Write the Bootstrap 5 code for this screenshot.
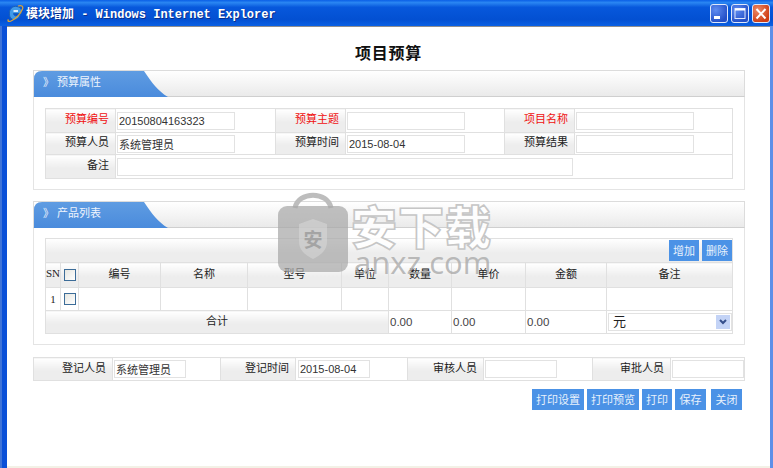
<!DOCTYPE html>
<html>
<head>
    <meta charset="utf-8">
    <link href="https://cdn.jsdelivr.net/npm/bootstrap@5.3.0/dist/css/bootstrap.min.css" rel="stylesheet">
    <style>
        html, body { height: 468px; overflow: hidden; }
        body {
            margin: 0;
            font: 11px "Liberation Sans", "Noto Sans CJK SC", sans-serif;
            color: #222;
            background: #fff;
        }
        .ie-window { width: 773px; height: 468px; position: relative; background: #0a50d8; box-shadow: inset 2px 0 0 #3f74d8; }

        /* Barra de titulo */
        .ie-titlebar {
            height: 26px;
            padding: 0 3px 0 7px;
            background: linear-gradient(180deg, #0a5fe6 0%, #2a86f2 10%, #0758dc 28%, #0350d2 75%, #0a60e4 100%);
            color: #fff;
        }
        .ie-title {
            margin-left: 2px;
            font: bold 12px "Liberation Mono", "Noto Sans CJK SC", monospace;
            text-shadow: 1px 1px 0 #0a2f8c;
            white-space: pre;
        }
        .win-btn {
            width: 18px; height: 19px;
            margin-left: 3px;
            border: 1px solid #dfe8fb;
            border-radius: 3px;
            background: radial-gradient(circle at 30% 30%, #5f8cf0, #2450c8 75%);
            padding: 0;
        }
        .win-btn svg { display: block; }
        .win-close { background: radial-gradient(circle at 30% 30%, #ec8a68, #cf3e14 75%); }

        .ie-content {
            position: absolute;
            left: 7px; top: 26px;
            width: 763px; height: 440px;
            background: #fff;
            border-top: 1px solid #8f8f8f;
            padding: 0 26px;
        }
        .ie-right { position: absolute; right: 0; top: 26px; width: 3px; height: 442px; background: #5d8fe8; }
        .ie-bottom { position: absolute; left: 7px; top: 466px; width: 763px; height: 2px; background: #f3f1e6; }

        .page-title {
            margin: 0;
            height: 43px;
            padding-top: 17px;
            font-size: 16px;
            line-height: 20px;
            font-weight: 700;
            letter-spacing: .7px;
            text-align: center;
            color: #111;
        }

        /* Paneles */
        .sec-panel { width: 712px; border: 1px solid #e4e4e4; border-top: 0; }
        .sec-one { height: 120px; }
        .sec-two { height: 144px; margin-top: 11px; }
        .sec-head {
            height: 27px;
            margin-right: -1px;
            margin-left: -1px;
            border: 1px solid #dcdcdc;
            border-bottom-color: #cfcfcf;
            background: linear-gradient(180deg, #fff, #eaeaea);
        }
        .sec-tab {
            width: 134px; height: 26px;
            padding-left: 9px;
            color: #eef4fd;
            line-height: 23px;
            background: linear-gradient(180deg, #5f9ce2, #4a8bdc);
            clip-path: path("M0 26 V8 Q0 0 8 0 H110 C118 12 124 20 134 26 Z");
            white-space: pre;
        }
        .sec-body { padding: 10px 11px 0; }
        .sec-one .sec-body { padding-top: 11px; }

        /* Tablas */
        .data-table { table-layout: fixed; width: 100%; margin: 0; border-color: #e0e0e0; --bs-table-bg: transparent; font-size: 11px; }
        .data-table td, .data-table th { padding: 0; font-weight: 400; vertical-align: middle; border-color: #e0e0e0; color: #222; }
        .lbl {
            background: linear-gradient(180deg, #fff 0%, #ededed 55%, #ededed 100%) !important;
            text-align: right;
            padding-right: 6px !important;
            padding-bottom: 5px !important;
            white-space: nowrap;
        }
        .lbl-red { color: #f01010 !important; }
        .hd {
            text-align: center;
            padding-bottom: 5px !important;
            background: linear-gradient(180deg, #fff 0%, #ededed 55%, #ededed 100%) !important;
        }
        .txt-field {
            display: block;
            height: 18px;
            margin-left: 1px;
            padding: 0 1px;
            border: 1px solid #e2e2e2;
            border-radius: 0;
            font-size: 11px;
            line-height: 16px;
            color: #333;
            background: #fff;
            outline: 0;
        }
        .w-118 { width: 118px; }
        .w-456 { width: 456px; }
        .w-73 { width: 72px; }

        .r-23 tr { height: 23px; }
        .r-22 { height: 22px !important; }
        .r-24 { height: 24px !important; }
        .r-25 { height: 25px !important; }
        .c-sn { width: 15px; } .c-ck { width: 18px; } .c-a { width: 82px; } .c-b { width: 87px; }
        .c-c { width: 94px; } .c-d { width: 47px; } .c-e { width: 63px; } .c-f { width: 74px; } .c-g { width: 81px; }
        .c-lbl1 { width: 70px; } .c-val1 { width: 160px; } .c-val2 { width: 159px; } .c-lbl2 { width: 70px; }
        .c-b1 { width: 79px; } .c-b2 { width: 108px; } .c-b3 { width: 75px; } .c-b4 { width: 112px; }
        .c-b5 { width: 76px; } .c-b6 { width: 109px; } .c-b7 { width: 78px; }

        .serif-cell { font: 11px "Liberation Serif", serif; text-align: center; }
        .grid-check {
            display: block;
            width: 12px; height: 12px;
            margin: 0 auto;
            border: 1px solid #3c6c98;
            border-radius: 0;
            background: linear-gradient(135deg, #e6e6e0, #fff);
            appearance: none;
        }
        .hd .grid-check { margin-top: 5px; }
        .num-cell { padding-left: 1px !important; color: #444 !important; font-size: 11.5px !important; }
        .tool-row {
            height: 24px;
            border: 1px solid #e0e0e0;
            border-bottom: 0;
            padding: 1px 0 0;
            background: linear-gradient(180deg, #fff 0%, #ededed 60%);
        }
        .act-btn {
            height: 21px;
            padding: 0 4px;
            border: 0;
            border-radius: 0;
            background: #4b92e6;
            color: #e8f1fc;
            font-size: 11px;
            line-height: 20px;
        }
        .act-btn:hover { background: #4b92e6; color: #e8f1fc; }
        .tool-btns { gap: 3px; }
        .unit-select {
            height: 18px;
            width: 124px;
            margin-left: 1px;
            padding: 0 0 0 4px;
            border: 1px solid #e2e2e2;
            border-radius: 0;
            font-size: 13px;
            line-height: 16px;
            color: #222;
            background-color: #fff;
            background-size: 14px 14px;
            background-position: right 1px center;
            background-image: url("data:image/svg+xml,%3Csvg xmlns='http://www.w3.org/2000/svg' viewBox='0 0 14 14'%3E%3Crect width='14' height='14' fill='%23c3d3f6'/%3E%3Cpath d='M4 5l3 3 3-3' fill='none' stroke='%23354f8c' stroke-width='2'/%3E%3C/svg%3E");
        }

        .foot-table { width: 712px; margin-top: 12px; }
        .foot-btns { width: 709px; margin-top: 8px; gap: 3px; }
        .gap-left { margin-left: 2px; }
        .btn-wide { width: 31px; }
        .btn-gap { margin-left: 2px; }

        /* Marca de agua */
        .wm-logo { position: absolute; left: 271px; top: 165px; }
        .wm-cn {
            position: absolute;
            left: 344px; top: 171px;
            font: 900 46px/52px "Noto Sans CJK SC", sans-serif;
            letter-spacing: 1px;
            color: rgba(255, 255, 255, .9);
            -webkit-text-stroke: 1.6px #c6c6c6;
            white-space: nowrap;
        }
        .wm-en {
            position: absolute;
            left: 347px; top: 217px;
            font: 400 31px/36px "Open Sans", sans-serif;
            color: rgba(170, 170, 170, .8);
            white-space: nowrap;
        }
    </style>
</head>
<body>
<div class="ie-window">
    <div class="ie-titlebar d-flex align-items-center">
        <svg width="17" height="18" viewBox="0 0 17 18">
            <path d="M2.5 11c-1-5.500 3-9.500 7.500-8.500 4.500 .8 4.800 4.500 4.500 7H6.500c.2 2.800 4 3.500 7 1-1 4-4.500 5-6.500 5-2.500 0-4.200-1.500-4.500-4.500z" fill="#3f9aea" stroke="#1a5fb8" stroke-width="1"/>
            <path d="M6.500 7h4.500" stroke="#fff" stroke-width="1.6"/>
            <path d="M1.500 15.500c-1.500 2 .5 2.800 3.500 1 4-2 8.500-7 10.500-11.500 1-3-1-4-4.500-3" fill="none" stroke="#d9a23a" stroke-width="1.3"/>
        </svg>
        <div class="ie-title">模块增加 - Windows Internet Explorer</div>
        <div class="ms-auto d-flex">
            <button class="win-btn" type="button" aria-label="min"><svg width="16" height="17" viewBox="0 0 16 17"><rect x="3" y="11" width="6" height="3" fill="#fff"/></svg></button>
            <button class="win-btn" type="button" aria-label="max"><svg width="16" height="17" viewBox="0 0 16 17"><rect x="3" y="3.500" width="10" height="10" fill="none" stroke="#dfe8fb" stroke-width="1"/><path d="M3 4.500h10" stroke="#fff" stroke-width="2"/></svg></button>
            <button class="win-btn win-close" type="button" aria-label="close"><svg width="16" height="17" viewBox="0 0 16 17"><path d="M3.500 4l9 9.500M12.500 4l-9 9.500" stroke="#fff" stroke-width="2"/></svg></button>
        </div>
    </div>

    <div class="ie-content">
        <h1 class="page-title">项目预算</h1>

        <div class="sec-panel sec-one">
            <div class="sec-head"><div class="sec-tab">》 预算属性</div></div>
            <div class="sec-body">
                <table class="table table-bordered data-table r-23">
                    <colgroup>
                        <col class="c-lbl1"><col class="c-val1"><col class="c-lbl2"><col class="c-val2"><col class="c-lbl2"><col>
                    </colgroup>
                    <tr class="r-24">
                        <td class="lbl lbl-red">预算编号</td><td><input class="txt-field w-118" value="20150804163323"></td>
                        <td class="lbl lbl-red">预算主题</td><td><input class="txt-field w-118"></td>
                        <td class="lbl lbl-red">项目名称</td><td><input class="txt-field w-118"></td>
                    </tr>
                    <tr class="r-22">
                        <td class="lbl">预算人员</td><td><input class="txt-field w-118" value="系统管理员"></td>
                        <td class="lbl">预算时间</td><td><input class="txt-field w-118" value="2015-08-04"></td>
                        <td class="lbl">预算结果</td><td><input class="txt-field w-118"></td>
                    </tr>
                    <tr class="r-24">
                        <td class="lbl">备注</td>
                        <td colspan="5"><input class="txt-field w-456"></td>
                    </tr>
                </table>
            </div>
        </div>

        <div class="sec-panel sec-two">
            <div class="sec-head"><div class="sec-tab">》 产品列表</div></div>
            <div class="sec-body">
                <div class="tool-row d-flex justify-content-end tool-btns">
                    <button class="btn act-btn" type="button">增加</button>
                    <button class="btn act-btn" type="button">删除</button>
                </div>
                <table class="table table-bordered data-table r-23">
                    <colgroup>
                        <col class="c-sn"><col class="c-ck"><col class="c-a"><col class="c-b"><col class="c-c"><col class="c-d"><col class="c-e"><col class="c-f"><col class="c-g"><col>
                    </colgroup>
                    <tr class="r-25">
                        <td class="hd serif-cell">SN</td>
                        <td class="hd"><input class="grid-check" type="checkbox" aria-label="all"></td>
                        <td class="hd">编号</td><td class="hd">名称</td><td class="hd">型号</td><td class="hd">单位</td>
                        <td class="hd">数量</td><td class="hd">单价</td><td class="hd">金额</td><td class="hd">备注</td>
                    </tr>
                    <tr>
                        <td class="serif-cell">1</td>
                        <td><input class="grid-check" type="checkbox" aria-label="row"></td>
                        <td></td><td></td><td></td><td></td><td></td><td></td><td></td><td></td>
                    </tr>
                    <tr>
                        <td class="hd" colspan="6">合计</td>
                        <td class="num-cell">0.00</td><td class="num-cell">0.00</td><td class="num-cell">0.00</td>
                        <td>
                            <select class="form-select unit-select" aria-label="unit"><option>元</option></select>
                        </td>
                    </tr>
                </table>
            </div>
        </div>

        <table class="table table-bordered data-table r-23 foot-table">
            <colgroup>
                <col class="c-b1"><col class="c-b2"><col class="c-b3"><col class="c-b4"><col class="c-b5"><col class="c-b6"><col class="c-b7"><col>
            </colgroup>
            <tr>
                <td class="lbl">登记人员</td><td><input class="txt-field w-73" value="系统管理员"></td>
                <td class="lbl">登记时间</td><td><input class="txt-field w-73 gap-left" value="2015-08-04"></td>
                <td class="lbl">审核人员</td><td><input class="txt-field w-73"></td>
                <td class="lbl">审批人员</td><td><input class="txt-field w-73"></td>
            </tr>
        </table>

        <div class="foot-btns d-flex justify-content-end">
            <button class="btn act-btn" type="button">打印设置</button>
            <button class="btn act-btn" type="button">打印预览</button>
            <button class="btn act-btn" type="button">打印</button>
            <button class="btn act-btn btn-wide" type="button">保存</button>
            <button class="btn act-btn btn-wide btn-gap" type="button">关闭</button>
        </div>

        <!-- Marca de agua encima del contenido -->
        <svg class="wm-logo" width="70" height="82" viewBox="0 0 70 82">
            <path d="M17 16C20 -1 50 -1 53 16" fill="none" stroke="#bdbdbd" stroke-width="5"/>
            <rect x="0" y="14" width="70" height="66" rx="9" fill="#a8a8a8" fill-opacity=".72"/>
            <path d="M21 32l14-5 14 5v18c0 9-8 14-14 17-6-3-14-8-14-17z" fill="#d8d8d8" fill-opacity=".55"/>
            <text x="35" y="55" text-anchor="middle" font-size="19" font-weight="700" fill="#a4a4a4" font-family="Noto Sans CJK SC, sans-serif">安</text>
        </svg>
        <div class="wm-cn">安下载</div>
        <div class="wm-en">anxz.com</div>
    </div>
    <div class="ie-right"></div>
    <div class="ie-bottom"></div>
</div>
<script src="https://cdn.jsdelivr.net/npm/bootstrap@5.3.0/dist/js/bootstrap.bundle.min.js"></script>
</body>
</html>
